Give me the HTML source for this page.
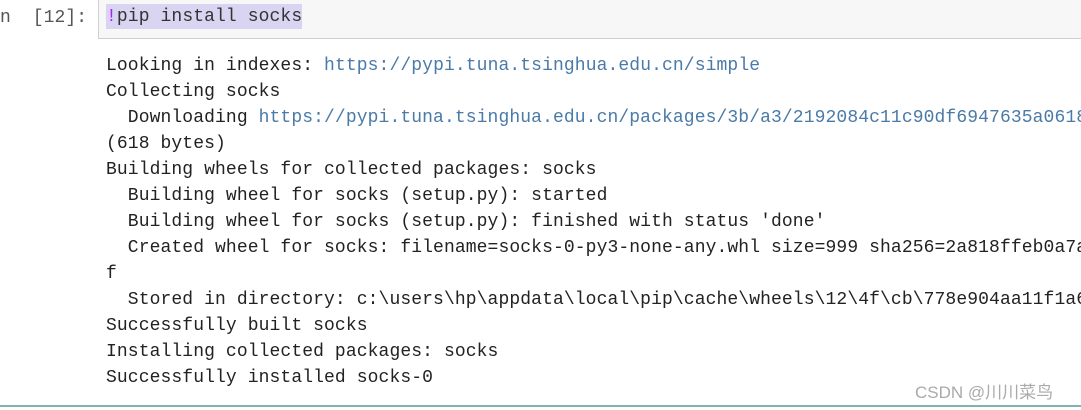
<!DOCTYPE html>
<html><head><style>
body{margin:0;width:1081px;height:410px;background:#fff;overflow:hidden;position:relative;font-family:"Liberation Mono","Noto Sans CJK SC",monospace;}
.p{position:absolute;left:0;top:5px;font-size:18px;line-height:26px;letter-spacing:0.1px;white-space:pre;color:#555}
.in{position:absolute;left:98px;top:-1px;width:990px;height:38px;background:#f7f7f7;border:1px solid #cfcfcf;}
.sel{position:absolute;left:106px;top:4px;height:25px;width:196px;background:#d8d4f2;}
.code{position:absolute;left:106px;top:4px;font-size:18px;line-height:26px;white-space:pre;color:#333;letter-spacing:0.1px}
.out{position:absolute;left:106px;top:53px;font-size:18px;line-height:26px;white-space:pre;color:#222;letter-spacing:0.1px}
.u{color:#4a7aa8}
.wm{position:absolute;left:915px;top:378px;font-family:"Liberation Sans","Noto Sans CJK SC",sans-serif;font-size:17px;color:#aaa}
.bl{position:absolute;left:0;top:405px;width:1081px;height:2px;background:#7fb3ad}
</style></head><body>
<div class="p">n  [12]:</div>
<div class="in"></div>
<div class="sel"></div>
<div class="code"><span style="color:#aa22ff">!</span>pip install socks</div>
<div class="out">Looking in indexes: <span class="u">https://pypi.tuna.tsinghua.edu.cn/simple</span>
Collecting socks
  Downloading <span class="u">https://pypi.tuna.tsinghua.edu.cn/packages/3b/a3/2192084c11c90df6947635a0618</span>
(618 bytes)
Building wheels for collected packages: socks
  Building wheel for socks (setup.py): started
  Building wheel for socks (setup.py): finished with status 'done'
  Created wheel for socks: filename=socks-0-py3-none-any.whl size=999 sha256=2a818ffeb0a7a
f
  Stored in directory: c:\users\hp\appdata\local\pip\cache\wheels\12\4f\cb\778e904aa11f1a6
Successfully built socks
Installing collected packages: socks
Successfully installed socks-0</div>
<div class="wm">CSDN @川川菜鸟</div>
<div class="bl"></div>
</body></html>
